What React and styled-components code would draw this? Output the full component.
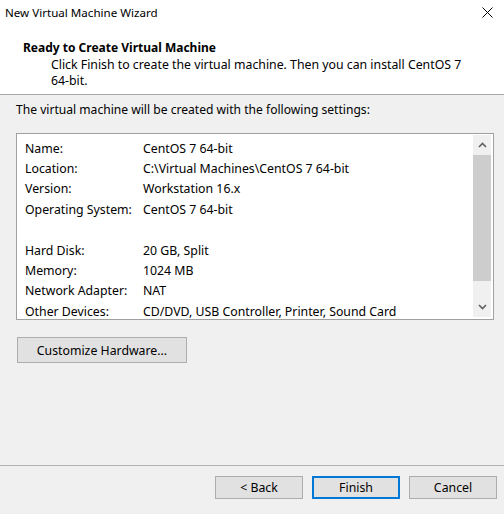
import React from "react";
import styled, { createGlobalStyle } from "styled-components";

const Global = createGlobalStyle`
  html, body { margin: 0; padding: 0; background: #f0f0f0; }
  body { font-family: "Noto Sans", "Liberation Sans", sans-serif; font-size: 12.2px; color: #000; }
  * { box-sizing: border-box; }
`;

const Window = styled.div`
  width: 504px;
  height: 514px;
  display: flex;
  flex-direction: column;
  background: #f0f0f0;
  overflow: hidden;
`;

const Header = styled.div`
  background: #fff;
  height: 95px;
  border-bottom: 1px solid #a8a8a8;
  display: flex;
  flex-direction: column;
`;

const TitleBar = styled.div`
  height: 26px;
  display: flex;
  align-items: center;
  justify-content: space-between;
  padding: 0 11px 2px 5px;
  font-size: 11.6px;
`;

const Heading = styled.div`
  margin: 14px 0 0 23px;
  font-weight: 700;
  line-height: 16px;
  font-size: 12px;
`;

const Description = styled.div`
  margin: 1px 30px 0 51px;
  line-height: 16px;
  font-size: 12.3px;
`;

const NoWrap = styled.span`
  white-space: nowrap;
`;

const Body = styled.div`
  flex: 1;
  display: flex;
  flex-direction: column;
  padding: 7px 10px 0 16px;
`;

const Intro = styled.div`
  line-height: 16px;
  font-size: 12.1px;
`;

const ListBox = styled.div`
  margin-top: 15px;
  height: 187px;
  border: 1px solid #a0a0a0;
  background: #fff;
  display: flex;
  padding: 1px 2px 2px 0;
`;

const Rows = styled.div`
  flex: 1;
  display: grid;
  grid-template-columns: 118px 1fr;
  grid-auto-rows: 20.4px;
  align-items: center;
  padding: 3px 0 0 8px;
  font-size: 12.3px;
`;

const ScrollBar = styled.div`
  width: 18px;
  display: flex;
  flex-direction: column;
  background: #f0f0f0;
`;

const ArrowBtn = styled.div`
  height: 20px;
  display: flex;
  align-items: center;
  justify-content: center;
`;

const Track = styled.div`
  flex: 1;
  display: flex;
  flex-direction: column;
`;

const Thumb = styled.div`
  height: 126px;
  background: #cdcdcd;
`;

const Button = styled.button`
  font-family: inherit;
  font-size: 12.3px;
  color: #000;
  background: #e1e1e1;
  border: 1px solid ${(p) => (p.$default ? "#0078d7" : "#adadad")};
  box-shadow: ${(p) => (p.$default ? "inset 0 0 0 1px #0078d7" : "none")};
  width: ${(p) => p.$w}px;
  height: ${(p) => p.$h}px;
  padding: 0;
  display: flex;
  align-items: center;
  justify-content: center;
`;

const CustomizeRow = styled.div`
  margin-top: 17px;
  padding-left: 1px;
`;

const Footer = styled.div`
  height: 49px;
  border-top: 1px solid #b4b4b4;
  display: flex;
  justify-content: flex-end;
  gap: 9px;
  padding: 10px 7px 0 0;
`;

const Chevron = ({ up }) => (
  <svg width="9" height="6" viewBox="0 0 9 6">
    <path
      d={up ? "M1 5 L4.5 1.5 L8 5" : "M1 1 L4.5 4.5 L8 1"}
      fill="none"
      stroke="#606060"
      strokeWidth="1.6"
    />
  </svg>
);

const CloseIcon = () => (
  <svg width="11" height="11" viewBox="0 0 11 11">
    <path d="M0.5 0.5 L10.5 10.5 M10.5 0.5 L0.5 10.5" stroke="#000" strokeWidth="1" />
  </svg>
);

const settings = [
  ["Name:", "CentOS 7 64-bit"],
  ["Location:", "C:\\Virtual Machines\\CentOS 7 64-bit"],
  ["Version:", "Workstation 16.x"],
  ["Operating System:", "CentOS 7 64-bit"],
  ["", ""],
  ["Hard Disk:", "20 GB, Split"],
  ["Memory:", "1024 MB"],
  ["Network Adapter:", "NAT"],
  ["Other Devices:", "CD/DVD, USB Controller, Printer, Sound Card"],
];

export default function App() {
  return (
    <>
      <Global />
      <Window>
        <Header>
          <TitleBar>
            <span>New Virtual Machine Wizard</span>
            <CloseIcon />
          </TitleBar>
          <Heading>Ready to Create Virtual Machine</Heading>
          <Description>
            Click Finish to create the virtual machine. Then you can install CentOS 7{" "}
            <NoWrap>64-bit.</NoWrap>
          </Description>
        </Header>
        <Body>
          <Intro>The virtual machine will be created with the following settings:</Intro>
          <ListBox>
            <Rows>
              {settings.map(([k, v], i) => (
                <React.Fragment key={i}>
                  <span>{k || "\u00a0"}</span>
                  <span>{v || "\u00a0"}</span>
                </React.Fragment>
              ))}
            </Rows>
            <ScrollBar>
              <ArrowBtn>
                <Chevron up />
              </ArrowBtn>
              <Track>
                <Thumb />
              </Track>
              <ArrowBtn>
                <Chevron />
              </ArrowBtn>
            </ScrollBar>
          </ListBox>
          <CustomizeRow>
            <Button $w={170} $h={26}>Customize Hardware...</Button>
          </CustomizeRow>
        </Body>
        <Footer>
          <Button $w={88} $h={23}>&lt; Back</Button>
          <Button $w={88} $h={23} $default>Finish</Button>
          <Button $w={88} $h={23}>Cancel</Button>
        </Footer>
      </Window>
    </>
  );
}
